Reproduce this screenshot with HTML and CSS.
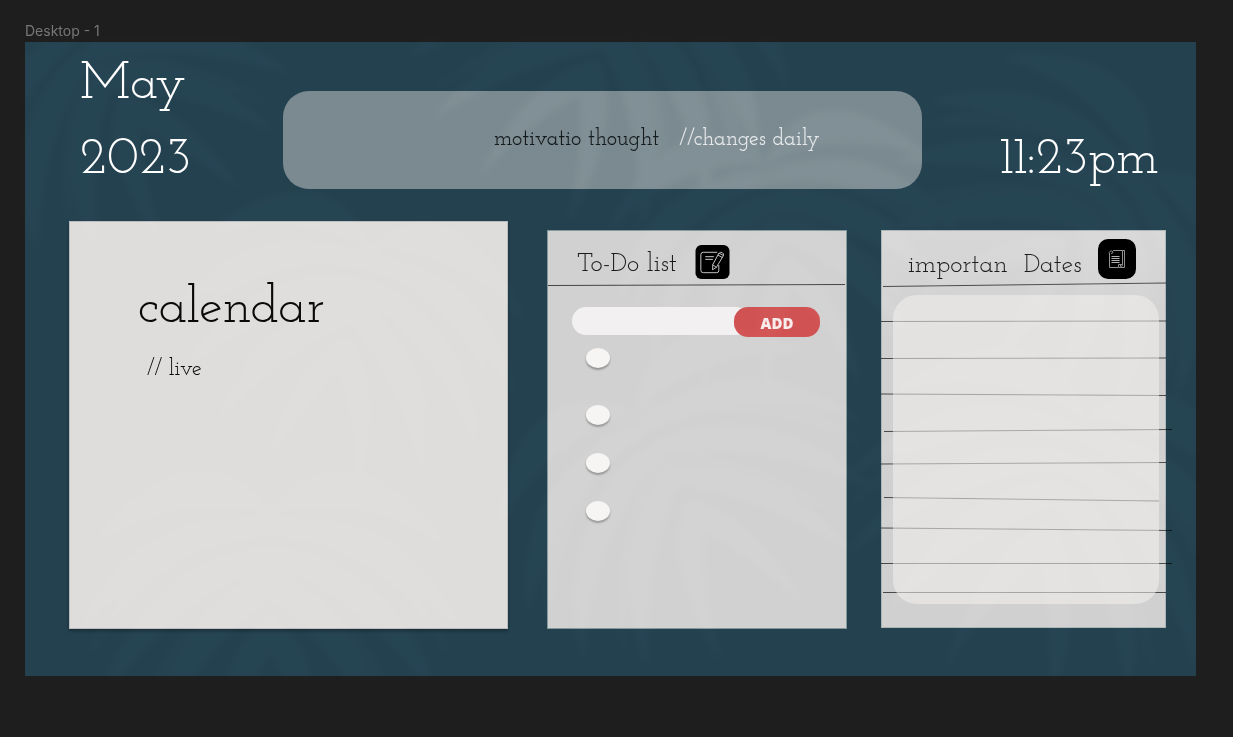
FILE: index.html
```html
<!DOCTYPE html>
<html lang="en">
<head>
<meta charset="utf-8">
<meta name="viewport" content="width=device-width, initial-scale=1">
<title>Desktop - 1</title>
<link rel="stylesheet" href="styles.css">
</head>
<body>
<p class="frame-name">Desktop - 1</p>
<main class="board">
  <header class="top">
    <div class="date"><div>May</div><div>2023</div></div>
    <section class="quote">
      <span class="quote-text">motivatio thought</span>
      <span class="quote-note">//changes daily</span>
    </section>
    <time class="clock">11:23pm</time>
  </header>

  <div class="widgets">
    <section class="panel calendar">
      <h1 class="calendar-title">calendar</h1>
      <p class="calendar-note">// live</p>
    </section>

    <section class="panel todo">
      <div class="todo-head">
        <h2 class="title">To-Do list</h2>
        <svg class="todo-icon" viewBox="0 0 35 35" aria-hidden="true">
          <rect width="35" height="35" rx="6" fill="#000"/>
          <g fill="none" stroke="#c4c4c4" stroke-width="1" stroke-linejoin="round" stroke-linecap="round">
            <path d="M22 7.500H8Q5.500 7.500 5.500 10V26Q5.500 28.500 8 28.500H22Q24 28.500 24 26V21"/>
            <path d="M10.500 12H18.500M10.500 14.800H17.500"/>
            <path d="M24.500 8.500 28.800 10.800 21.500 23 17.500 25.500 17.800 20.500ZM24.500 8.500Q25.500 6.700 27.500 7.800Q29.700 9 28.800 10.800M23.400 10.500 27.600 12.900M17.800 20.500 21.500 23"/>
          </g>
        </svg>
      </div>
      <svg class="rule" viewBox="0 0 300 2" preserveAspectRatio="none" aria-hidden="true"><path d="M0 1.500 299 .5"/></svg>
      <form class="add-form">
        <input class="add-input" type="text" aria-label="New task">
        <button class="add-button" type="button">ADD</button>
      </form>
      <ul class="tasks">
        <li><input class="tick" type="checkbox" aria-label="Task 1"></li>
        <li><input class="tick" type="checkbox" aria-label="Task 2"></li>
        <li><input class="tick" type="checkbox" aria-label="Task 3"></li>
        <li><input class="tick" type="checkbox" aria-label="Task 4"></li>
      </ul>
    </section>

    <section class="panel dates">
      <svg class="lines" viewBox="0 0 285 398" preserveAspectRatio="none" aria-hidden="true">
        <path d="M2 56.500 285 53M0 91.500 285 91M0 128.500 285 128M0 164 285 165.500M3 201.500 291 199.500M0 234 285 232.500M3 267.500 278 271M0 298 291 300.500M0 333.500H291M2 362.500H285"/>
      </svg>
      <div class="dates-head">
        <h2 class="title dates-title"><span>importan</span><span>Dates</span></h2>
        <svg class="dates-icon" viewBox="0 0 38 40" aria-hidden="true">
          <rect width="38" height="40" rx="10" fill="#000"/>
          <g fill="none" stroke="#8c8c8c" stroke-width="1">
            <path d="M15 11.500H24.500V25.500M11.500 14V28.500H20.500M26.500 12V28.500H21"/>
            <path d="M24.500 11.500H26.500V28M11.500 15A2 2 0 1 1 15 13Q15 14.500 13 14.500M20.500 28.500V25.500H24.500Q24.500 28.500 21.500 28.500M22.500 25.500V27.500"/>
            <path stroke="#b0b0b0" d="M13.500 17.500H21.500M13.500 19.500H21.500M13.500 21.500H21.500M13.500 23.500H21.500"/>
          </g>
        </svg>
      </div>
      <div class="sheet"></div>
    </section>
  </div>

  <svg class="leaves" viewBox="0 0 1171 634" preserveAspectRatio="xMidYMid slice" aria-hidden="true">
    <defs>
      <g id="half">
        <path d="M0 0C30-45 90-55 150 30C100-5 50-10 0 0Z"/>
        <path d="M0 12C60-5 125 20 160 100C115 50 60 25 0 20Z"/>
        <path d="M0 30C55 30 115 70 140 155C100 100 50 60 0 42Z"/>
        <path d="M0 55C40 65 85 110 98 190C70 140 35 95 0 72Z"/>
        <path d="M0 85C22 100 45 140 42 215C30 170 15 140 0 115Z"/>
        <path d="M0 0C70 5 130 50 150 120C110 60 50 20 0 12Z" opacity=".5"/>
        <path d="M0 42C60 70 90 120 110 170C70 110 40 80 0 55Z" opacity=".5"/>
      </g>
      <g id="leaf"><use href="#half"/><use href="#half" transform="scale(-1 1)"/></g>
    </defs>
    <use href="#leaf" transform="translate(345 205) rotate(14) scale(1.1)"/>
    <use href="#leaf" transform="translate(245 470) scale(1.2)"/>
    <use href="#leaf" transform="translate(610 370) rotate(-30) scale(1.2)"/>
    <use href="#leaf" transform="translate(740 120) rotate(-12) scale(1.1)"/>
    <use href="#leaf" transform="translate(1060 375) rotate(18) scale(1.3)"/>
    <use href="#leaf" transform="translate(1120 130) rotate(50) scale(1.2)"/>
    <use href="#leaf" transform="translate(620 -70) rotate(28) scale(1.2)"/>
    <use href="#leaf" transform="translate(40 -20) rotate(-35) scale(1.1)"/>
  </svg>
</main>
</body>
</html>
```
FILE: styles.css
```css
* {
  box-sizing: border-box;
}

body {
  margin: 0;
  min-height: 100vh;
  padding: 22px 37px 61px 25px;
  display: flex;
  flex-direction: column;
  background: #1e1e1e;
  color: #080808;
  font-family: "Josefin Slab", "Liberation Serif", serif;
}

h1,
h2,
p,
ul {
  margin: 0;
  padding: 0;
  font-weight: 400;
  list-style: none;
}

.frame-name {
  height: 20px;
  color: #777;
  font: 14px/18px Inter, sans-serif;
}

.board {
  position: relative;
  flex: 1;
  display: flex;
  flex-direction: column;
  padding-bottom: 47px;
  background: #24414f;
}

.top {
  display: grid;
  grid-template-columns: 203fr 638fr 237fr;
  align-items: start;
  min-height: 179px;
  padding: 0 37px 0 55px;
  color: #fff;
}

.date,
.clock {
  padding-top: 6px;
  font-size: 52px;
  line-height: 75px;
}

.clock {
  padding-top: 81px;
  text-align: right;
}

.quote {
  display: flex;
  align-items: center;
  gap: 20px;
  height: 98px;
  margin-top: 49px;
  padding: 0 0 0 33%;
  border-radius: 26px;
  background: #7b8a90;
  font-size: 22px;
  font-weight: 500;
  line-height: 30px;
  white-space: nowrap;
}

.quote-text {
  color: #141a1c;
}

.quote-note {
  color: #e4e8ea;
}

.widgets {
  flex: 1;
  display: grid;
  grid-template-columns: minmax(0, 444fr) minmax(0, 300fr) minmax(0, 285fr);
  gap: 34px;
  padding: 0 30px 0 44px;
}

.panel {
  border: 1px solid #b9bdbe;
  background: #d1d1d1;
}

.calendar {
  margin-right: 5px;
  padding: 57px 20px 20px 68px;
  background: #dedddb;
  box-shadow: 0 2px 3px rgba(0, 0, 0, 0.3);
}

.calendar-title {
  font-size: 53px;
  line-height: 60px;
}

.calendar-note {
  padding: 16px 0 0 9px;
  font-size: 22px;
  line-height: 30px;
}

.todo {
  margin-top: 9px;
  border-color: #84979b;
}

.title {
  color: #1a1a1a;
  font-size: 26px;
  line-height: 30px;
  white-space: nowrap;
}

.todo-head {
  display: flex;
  gap: 18px;
  padding: 14px 0 4px 29px;
}

.todo-head .title {
  padding-top: 5px;
}

.todo-icon {
  width: 35px;
  height: 34px;
}

.rule {
  display: block;
  width: 100%;
  height: 2px;
  fill: none;
  stroke: #444;
}

.add-form {
  display: flex;
  margin: 21px 26px 0 24px;
}

.add-input {
  flex: 1;
  min-width: 0;
  height: 28px;
  padding: 0 24px 0 14px;
  border: 0;
  border-radius: 14px;
  background: #f2f0f0;
  font-size: 16px;
}

.add-button {
  width: 86px;
  height: 30px;
  margin-left: -16px;
  padding: 2px 0 0;
  border: 0;
  border-radius: 14px;
  background: #d15253;
  color: #f8ecec;
  font: 800 15px/20px "Open Sans", sans-serif;
}

.tasks {
  display: grid;
  gap: 28px;
  padding: 11px 0 0 38px;
}

.tasks li {
  height: 20px;
}

.tasks li:first-child {
  margin-bottom: 9px;
}

.tick {
  appearance: none;
  display: block;
  width: 24px;
  height: 20px;
  margin: 0;
  border-radius: 50%;
  background: #f6f5f4;
  box-shadow: 0 2px 2px rgba(0, 0, 0, 0.3);
}

.dates {
  position: relative;
  display: flex;
  flex-direction: column;
  margin: 9px 0 1px;
  border-color: #aab4b6;
  background: linear-gradient(#d7d7d7, #d0d0d0 120px);
}

.lines {
  position: absolute;
  inset: -1px;
  width: calc(100% + 2px);
  height: calc(100% + 2px);
  overflow: visible;
  fill: none;
  stroke: rgba(0, 0, 0, 0.65);
}

.dates-head {
  position: relative;
  display: flex;
  justify-content: space-between;
  align-items: flex-start;
  height: 64px;
  padding: 8px 29px 0 26px;
}

.dates-title {
  display: flex;
  gap: 16px;
  padding-top: 12px;
}

.dates-icon {
  width: 38px;
  height: 40px;
}

.sheet {
  position: relative;
  flex: 1;
  margin: 0 6px 23px 11px;
  border-radius: 24px;
  background: rgba(243, 241, 239, 0.55);
}

.leaves {
  position: absolute;
  inset: 0;
  width: 100%;
  height: 100%;
  fill: #fff;
  opacity: 0.05;
  filter: blur(3px);
  mix-blend-mode: overlay;
  pointer-events: none;
}
```
